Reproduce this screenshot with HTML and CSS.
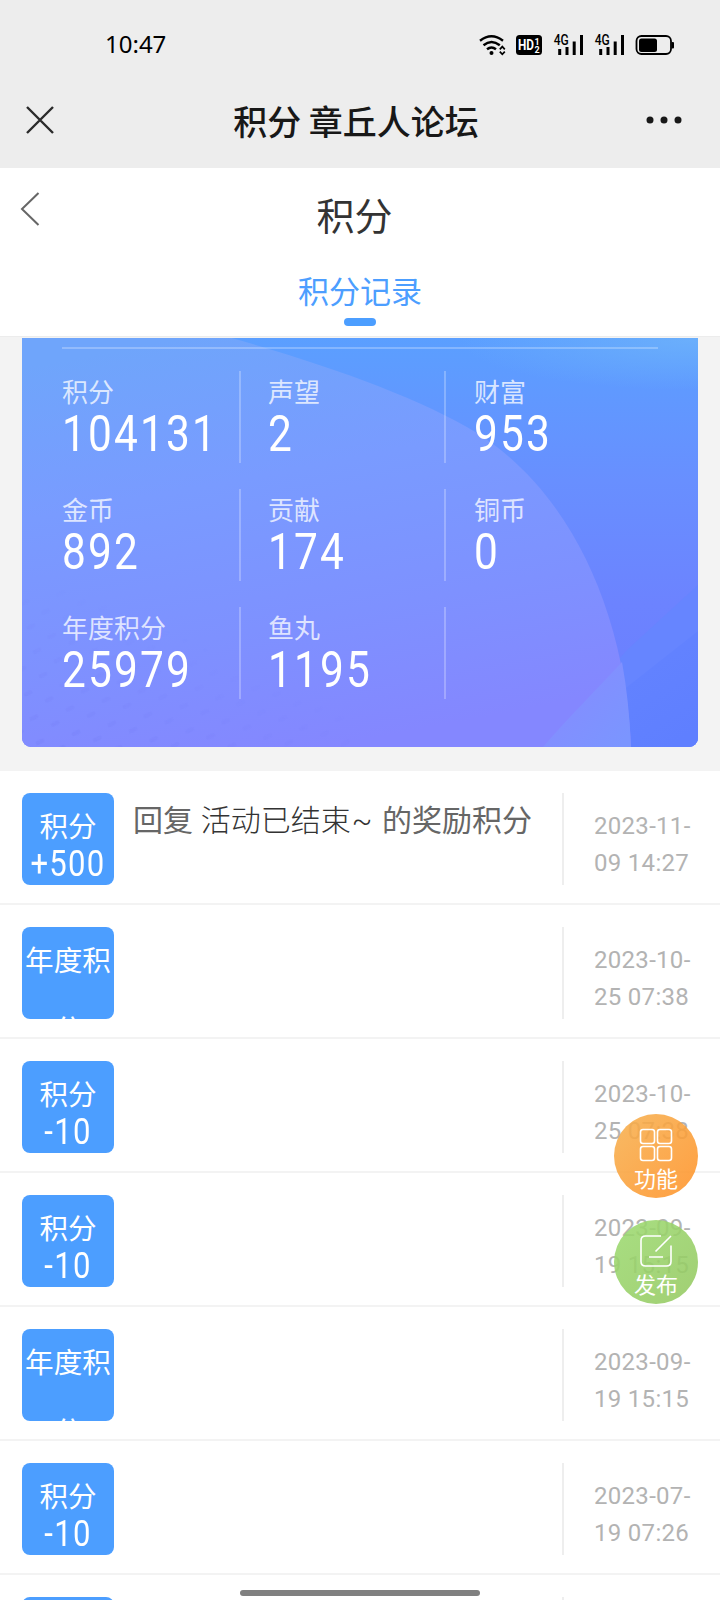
FILE: index.html
```html
<!DOCTYPE html>
<html lang="zh-CN">
<head>
  <meta charset="UTF-8">
  <meta name="viewport" content="width=device-width, initial-scale=1.0">
  <title>积分 章丘人论坛</title>
  <link rel="stylesheet" href="styles.css">
</head>
<body>
  <div class="phone">
    <div class="status-bar">
      <span class="time">10:47</span>
      <svg class="status-icons" width="198" height="24" viewBox="478 33 198 24">
        <g fill="none" stroke="#000" stroke-width="2.4">
          <path d="M480 40.8Q491.500 31.800 503 40.800"/>
          <path d="M483.500 45.200Q491.500 38.600 499.800 45.200"/>
          <path d="M487 49.200Q491.500 45.600 496 49.200"/>
        </g>
        <circle cx="491.500" cy="53" r="2"/>
        <path d="M499.800 49.300L502.300 46.600L504.800 49.300M499.800 51.700L502.300 54.300L504.800 51.700" fill="none" stroke="#000" stroke-width="1.700"/>
        <rect x="516" y="35" width="26" height="20" rx="3.500"/>
        <text class="hd" x="518" y="50.300" textLength="16" lengthAdjust="spacingAndGlyphs">HD</text>
        <text class="hd-num" x="534.500" y="44.500">1</text>
        <text class="hd-num" x="534.500" y="52.500">2</text>
        <g id="signal">
          <text class="net" x="553.800" y="45" textLength="15" lengthAdjust="spacingAndGlyphs">4G</text>
          <path d="M559.700 49v6M567 47v8M574.200 41.500V55M581.500 35v20" stroke="#000" stroke-width="3"/>
        </g>
        <use href="#signal" x="41"/>
        <rect x="636.500" y="36" width="34.500" height="18" rx="5" fill="none" stroke="#000" stroke-width="1.800"/>
        <rect x="639" y="38.500" width="18" height="13.500" rx="2.500"/>
        <rect x="671.500" y="42" width="2.500" height="6.500" rx="1"/>
      </svg>
    </div>

    <div class="nav-bar">
      <svg class="close" width="28" height="28" viewBox="0 0 28 28"><path d="M1 1L27 27M27 1L1 27"/></svg>
      <span class="nav-title">积分 章丘人论坛</span>
      <svg class="more" width="36" height="8" viewBox="0 0 36 8"><circle cx="4" cy="4" r="3.500"/><circle cx="18" cy="4" r="3.500"/><circle cx="32" cy="4" r="3.500"/></svg>
    </div>

    <div class="page-head">
      <div class="head-row">
        <svg class="back" width="20" height="34" viewBox="0 0 20 34"><path d="M18.500 1L2 17L18.500 33"/></svg>
        <h1>积分</h1>
      </div>
      <div class="tab">积分记录</div>
    </div>

    <div class="card-wrap">
      <div class="card">
        <svg class="card-bg" width="676" height="409" viewBox="22 338 676 409">
          <defs>
            <linearGradient id="base" x1="0" y1="0" x2="0" y2="1">
              <stop offset="0" stop-color="#5b9fff"/>
              <stop offset=".35" stop-color="#688fff"/>
              <stop offset=".65" stop-color="#6c83ff"/>
              <stop offset="1" stop-color="#6a7dff"/>
            </linearGradient>
            <radialGradient id="shine">
              <stop offset="0" stop-color="#6cb0fb" stop-opacity=".9"/>
              <stop offset="1" stop-color="#6cb0fb" stop-opacity="0"/>
            </radialGradient>
            <linearGradient id="disc" gradientUnits="userSpaceOnUse" x1="180" y1="338" x2="260" y2="760">
              <stop offset="0" stop-color="#6fa5fb"/>
              <stop offset=".35" stop-color="#799bff"/>
              <stop offset=".7" stop-color="#7e91ff"/>
              <stop offset="1" stop-color="#8487ff"/>
            </linearGradient>
            <linearGradient id="band" gradientUnits="userSpaceOnUse" x1="600" y1="640" x2="670" y2="747">
              <stop offset="0" stop-color="#6484ff"/>
              <stop offset="1" stop-color="#5f7fff"/>
            </linearGradient>
            <linearGradient id="corner" gradientUnits="userSpaceOnUse" x1="575" y1="700" x2="625" y2="740">
              <stop offset="0" stop-color="#828fff"/>
              <stop offset="1" stop-color="#7b95ff"/>
            </linearGradient>
            <pattern id="dots" width="37" height="25" patternUnits="userSpaceOnUse" patternTransform="rotate(-14)">
              <path d="M5 5l5-1M24 16l5-1" stroke="#6670e8" stroke-width="4" stroke-linecap="round" opacity=".16"/>
            </pattern>
            <linearGradient id="fade" x1="1" y1="0" x2="0" y2="1">
              <stop offset=".4" stop-color="#000"/>
              <stop offset="1" stop-color="#fff"/>
            </linearGradient>
            <mask id="dotMask"><rect x="22" y="590" width="330" height="157" fill="url(#fade)"/></mask>
          </defs>
          <rect x="22" y="338" width="676" height="409" fill="url(#base)"/>
          <ellipse cx="690" cy="340" rx="230" ry="50" fill="url(#shine)"/>
          <path d="M543 747L627 650L698 585V747Z" fill="#6685ff"/>
          <path d="M580 747L627 687L698 631V747Z" fill="url(#band)"/>
          <path d="M22 338H232C330 366 420 398 477 433C570 492 625 610 631 747H22Z" fill="url(#disc)"/>
          <path d="M543 747C570 716 596 690 622 662Q629 700 631 747Z" fill="url(#corner)"/>
          <rect x="22" y="590" width="330" height="157" fill="url(#dots)" mask="url(#dotMask)"/>
        </svg>
        <div class="stats">
          <div class="stat"><span class="label">积分</span><span class="num">104131</span></div>
          <div class="stat"><span class="label">声望</span><span class="num">2</span></div>
          <div class="stat"><span class="label">财富</span><span class="num">953</span></div>
          <div class="stat"><span class="label">金币</span><span class="num">892</span></div>
          <div class="stat"><span class="label">贡献</span><span class="num">174</span></div>
          <div class="stat"><span class="label">铜币</span><span class="num">0</span></div>
          <div class="stat"><span class="label">年度积分</span><span class="num">25979</span></div>
          <div class="stat"><span class="label">鱼丸</span><span class="num">1195</span></div>
          <div class="stat"></div>
        </div>
      </div>
    </div>

    <div class="list">
      <div class="row">
        <div class="tile"><p>积分</p><b>+500</b></div>
        <div class="desc">回复 <a>活动已结束<i>~</i></a> 的奖励积分</div>
        <div class="date">2023-11-<br>09 14:27</div>
      </div>
      <div class="row">
        <div class="tile"><p>年度积分</p></div>
        <div class="desc"></div>
        <div class="date">2023-10-<br>25 07:38</div>
      </div>
      <div class="row">
        <div class="tile"><p>积分</p><b>-10</b></div>
        <div class="desc"></div>
        <div class="date">2023-10-<br>25 07:38</div>
      </div>
      <div class="row">
        <div class="tile"><p>积分</p><b>-10</b></div>
        <div class="desc"></div>
        <div class="date">2023-09-<br>19 15:15</div>
      </div>
      <div class="row">
        <div class="tile"><p>年度积分</p></div>
        <div class="desc"></div>
        <div class="date">2023-09-<br>19 15:15</div>
      </div>
      <div class="row">
        <div class="tile"><p>积分</p><b>-10</b></div>
        <div class="desc"></div>
        <div class="date">2023-07-<br>19 07:26</div>
      </div>
      <div class="row">
        <div class="tile"></div>
        <div class="desc"></div>
        <div class="date"></div>
      </div>
    </div>

    <div class="fabs">
      <div class="fab fab-menu">
        <svg width="34" height="34" viewBox="0 0 34 34">
          <rect x="1.500" y="1.500" width="14" height="14" rx="2.500"/>
          <rect x="18.500" y="1.500" width="14" height="14" rx="2.500"/>
          <rect x="1.500" y="18.500" width="14" height="14" rx="2.500"/>
          <rect x="18.500" y="18.500" width="14" height="14" rx="2.500"/>
        </svg>
        <span>功能</span>
      </div>
      <div class="fab fab-post">
        <svg width="34" height="34" viewBox="0 0 34 34">
          <path d="M22 2H6.500Q2 2 2 6.500V27.500Q2 32 6.500 32H27.500Q32 32 32 27.500V11.500M32 2L16.500 17.500M10 23H24"/>
        </svg>
        <span>发布</span>
      </div>
    </div>
    <div class="home-bar"></div>
  </div>
</body>
</html>
```
FILE: styles.css
```css
* {
  margin: 0;
  padding: 0;
  box-sizing: border-box;
}

body {
  font-family: "Noto Sans CJK SC", sans-serif;
  background: #f3f3f3;
}

.phone {
  width: 720px;
  height: 1600px;
  overflow: hidden;
  position: relative;
}

.status-bar {
  height: 80px;
  padding: 0 44px 0 105px;
  background: #ededed;
  display: flex;
  justify-content: space-between;
  align-items: center;
}

.time {
  font: 24px/30px "Noto Sans", sans-serif;
  color: #000;
  padding-top: 7px;
}

.status-icons {
  margin-top: 10px;
}

.hd,
.hd-num,
.net {
  font-family: Roboto, sans-serif;
  font-weight: bold;
}

.hd {
  font-size: 15px;
  fill: #fff;
}

.hd-num {
  font-size: 9px;
  fill: #fff;
}

.net {
  font-size: 14px;
  font-weight: 500;
}

.nav-bar {
  height: 88px;
  padding: 0 38px 0 26px;
  background: #ededed;
  display: flex;
  align-items: center;
}

.close {
  margin: -8px 0 0 0;
  fill: none;
  stroke: #2b2b2b;
  stroke-width: 2.4;
}

.nav-title {
  flex: 1;
  padding: 0 0 7px 12px;
  text-align: center;
  font-size: 34px;
  font-weight: 500;
  line-height: 80px;
  color: #181818;
}

.more {
  margin-top: -8px;
  fill: #181818;
}

.page-head {
  height: 169px;
  background: #fff;
  border-bottom: 1px solid #ececec;
  text-align: center;
}

.head-row {
  height: 95px;
  padding: 24px 0 0 20px;
  display: flex;
}

.back {
  fill: none;
  stroke: #666;
  stroke-width: 2;
}

.head-row h1 {
  flex: 1;
  padding-right: 51px;
  font-size: 38px;
  font-weight: normal;
  line-height: 44px;
  color: #333;
}

.tab {
  font-size: 31px;
  line-height: 54px;
  color: #4c9eff;
}

.tab::after {
  content: "";
  display: block;
  width: 32px;
  height: 8px;
  margin: 1px auto 0;
  border-radius: 4px;
  background: #4c9eff;
}

.card-wrap {
  height: 434px;
  padding: 1px 22px 0;
}

.card {
  position: relative;
  height: 409px;
  padding: 9px 40px 0;
  border-radius: 0 0 9px 9px;
  overflow: hidden;
}

.card-bg {
  position: absolute;
  left: 0;
  top: 0;
}

.stats {
  position: relative;
  border-top: 2px solid rgba(255, 255, 255, .25);
  padding-top: 22px;
  display: grid;
  grid-template-columns: 179px 178px 179px;
  column-gap: 27px;
  row-gap: 26px;
}

.stat {
  height: 92px;
  border-right: 2px solid rgba(255, 255, 255, .25);
}

.stat:nth-child(3n) {
  border: none;
  padding-left: 1px;
}

.label {
  display: block;
  font-size: 26px;
  line-height: 39px;
  color: rgba(255, 255, 255, .75);
}

.num {
  display: inline-block;
  padding-top: 2px;
  font: 50.5px/44px Roboto, sans-serif;
  letter-spacing: 2.6px;
  color: #fff;
  transform: scaleX(.84);
  transform-origin: left;
}

.list {
  background: #fff;
}

.row {
  height: 134px;
  padding: 22px 22px 0;
  border-bottom: 2px solid #f3f3f3;
  display: flex;
}

.tile {
  width: 92px;
  height: 92px;
  border-radius: 8px;
  background: #4c9eff;
  color: #fff;
  text-align: center;
  overflow: hidden;
}

.tile p {
  margin-top: -3px;
  font-size: 28.6px;
  line-height: 69px;
}

.tile b {
  display: block;
  margin-top: -13px;
  font: 37px/36px Roboto, sans-serif;
  letter-spacing: 1.5px;
  transform: scaleX(.84);
}

.desc {
  flex: 1;
  height: 92px;
  padding-left: 19px;
  border-right: 2px solid #eee;
  font-size: 30px;
  line-height: 50px;
  word-spacing: 1px;
  color: #666;
  white-space: nowrap;
}

.desc a {
  font-weight: 300;
  color: #333;
}

.desc i {
  font-family: Roboto, sans-serif;
  font-style: normal;
  line-height: 1;
  margin: 0 2px 0 1px;
}

.date {
  width: 134px;
  padding: 15px 0 0 30px;
  font: 24px/37px Roboto, sans-serif;
  letter-spacing: .3px;
  color: #b3b3b3;
  white-space: nowrap;
}

/* floating buttons over the list */
.fabs {
  position: absolute;
  right: 22px;
  top: 1114px;
  display: flex;
  flex-direction: column;
  gap: 22px;
}

.fab {
  width: 84px;
  height: 84px;
  border-radius: 50%;
  padding-top: 14px;
  display: flex;
  flex-direction: column;
  align-items: center;
  color: #fff;
  font-size: 22px;
  line-height: 30px;
}

.fab svg {
  fill: none;
  stroke: #fff;
  stroke-width: 1.6;
}

.fab-menu {
  background: linear-gradient(135deg, rgba(246, 177, 80, .88), rgba(255, 145, 38, .88));
}

.fab-post {
  background: linear-gradient(135deg, rgba(156, 218, 112, .88), rgba(148, 200, 96, .88));
}

.home-bar {
  position: absolute;
  left: 240px;
  bottom: 4px;
  width: 240px;
  height: 6px;
  border-radius: 3px;
  background: #808080;
}
```
